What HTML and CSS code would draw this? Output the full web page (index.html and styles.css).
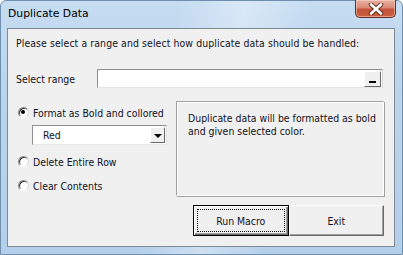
FILE: index.html
```html
<!DOCTYPE html>
<html>
<head>
<meta charset="utf-8">
<link rel="stylesheet" href="styles.css">
</head>
<body>
<div class="window">
  <div class="titlebar">
    <span class="title">Duplicate Data</span>
    <div class="close">
      <svg width="16" height="12" viewBox="0 0 16 12">
        <path d="M3 1.5 L13 10.5 M13 1.5 L3 10.5" stroke="#5a2a22" stroke-width="4.4" stroke-linecap="round" fill="none"/>
        <path d="M3 1.5 L13 10.5 M13 1.5 L3 10.5" stroke="#ffffff" stroke-width="2.6" stroke-linecap="round" fill="none"/>
      </svg>
    </div>
  </div>
  <div class="client">
    <p class="intro">Please select a range and select how duplicate data should be handled:</p>
    <div class="range-row">
      <span class="range-label">Select range</span>
      <div class="refedit">
        <div class="ref-btn"><span class="ref-bar"></span></div>
      </div>
    </div>
    <div class="main">
      <div class="options">
        <div class="radio-row first"><span class="radio checked"></span><span>Format as Bold and collored</span></div>
        <div class="combo">
          <span class="combo-text">Red</span>
          <div class="drop"><span class="tri"></span></div>
        </div>
        <div class="radio-row second"><span class="radio"></span><span>Delete Entire Row</span></div>
        <div class="radio-row third"><span class="radio"></span><span>Clear Contents</span></div>
      </div>
      <div class="info">Duplicate data will be formatted as bold and given selected color.</div>
    </div>
    <div class="buttons">
      <div class="btn default"><span class="focus">Run Macro</span></div>
      <div class="btn">Exit</div>
    </div>
  </div>
</div>
</body>
</html>
```

FILE: styles.css
```css
* { box-sizing: border-box; }
html, body { margin: 0; padding: 0; }
body {
  width: 403px;
  height: 255px;
  overflow: hidden;
  font-family: "DejaVu Sans Condensed", "DejaVu Sans", sans-serif;
  font-size: 10.4px;
  color: #111122;
}
.window {
  width: 403px;
  height: 255px;
  background:
    linear-gradient(100deg, rgba(255,255,255,0) 40%, rgba(255,255,255,0.35) 55%, rgba(255,255,255,0) 70%),
    linear-gradient(180deg, #c6dcf1 0%, #bcd5ee 30%, #b4cfea 100%);
  border: 1px solid #6f8fae;
  border-radius: 6px 6px 0 0;
  padding: 0 7px 7px 6px;
  display: flex;
  flex-direction: column;
}
.titlebar {
  height: 27px;
  display: flex;
  align-items: flex-start;
  justify-content: space-between;
}
.title {
  font-family: "DejaVu Sans", sans-serif;
  font-size: 10.8px;
  color: #000;
  margin-top: 6px;
  margin-left: 1px;
}
.close {
  width: 41px;
  height: 18px;
  margin-top: -1px;
  margin-right: -1px;
  border: 1px solid #6b2a22;
  border-top: none;
  border-radius: 0 0 5px 5px;
  background: linear-gradient(180deg, #e9b0a2 0%, #d98a76 45%, #c5523a 55%, #c8613f 100%);
  box-shadow: inset 0 0 0 1px rgba(255,220,210,0.5);
  display: flex;
  align-items: center;
  justify-content: center;
}
.client {
  flex: 1;
  background: #f0f0f0;
  border: 1px solid #7d8a96;
  padding: 8px 10px 0 8px;
  display: flex;
  flex-direction: column;
}
.intro {
  margin: 0;
  line-height: 13px;
  letter-spacing: 0.1px;
}
.range-row {
  margin-top: 19px;
  display: flex;
  align-items: center;
  height: 19px;
}
.range-label {
  width: 81px;
}
.refedit {
  width: 286px;
  height: 19px;
  background: #fff;
  border: 1px solid #8e8f8f;
  border-right-color: #d8d8d8;
  border-bottom-color: #e3e3e3;
  display: flex;
  justify-content: flex-end;
  align-items: center;
  padding-right: 1px;
}
.ref-btn {
  width: 17px;
  height: 16px;
  background: #f0f0f0;
  border: 1px solid;
  border-color: #fff #696969 #696969 #fff;
  display: flex;
  align-items: flex-end;
  justify-content: center;
  padding-bottom: 3px;
}
.ref-bar {
  width: 7px;
  height: 2px;
  background: #000;
}
.main {
  margin-top: 13px;
  display: flex;
  height: 95px;
}
.options {
  width: 160px;
}
.radio-row {
  display: flex;
  align-items: center;
  height: 13px;
}
.radio-row.first { margin-top: 5px; }
.radio-row.second { margin-top: 10px; }
.radio-row.third { margin-top: 11px; }
.radio {
  width: 11px;
  height: 11px;
  margin-left: 2px;
  margin-right: 4px;
  border-radius: 50%;
  background: #fff;
  border: 1px solid;
  border-color: #7a7a7a #d8d8d8 #f8f8f8 #8a8a8a;
  box-shadow: inset 1px 1px 0 #404040;
  position: relative;
}
.radio.checked::after {
  content: "";
  position: absolute;
  left: 2px;
  top: 2px;
  width: 4px;
  height: 4px;
  border-radius: 50%;
  background: #000;
}
.combo {
  margin-top: 6px;
  margin-left: 16px;
  width: 135px;
  height: 20px;
  background: #fff;
  border: 1px solid #8e8f8f;
  border-right-color: #e0e0e0;
  border-bottom-color: #e8e8e8;
  display: flex;
  align-items: center;
  justify-content: space-between;
  padding: 0 1px 0 10px;
}
.drop {
  width: 15px;
  height: 16px;
  background: #f0f0f0;
  border: 1px solid;
  border-color: #fff #696969 #696969 #fff;
  display: flex;
  align-items: center;
  justify-content: center;
}
.tri {
  width: 0;
  height: 0;
  border-left: 4px solid transparent;
  border-right: 4px solid transparent;
  border-top: 4px solid #000;
  margin-top: 1px;
}
.info {
  width: 208px;
  height: 95px;
  border: 1px solid #a0a0a0;
  border-right-color: #fff;
  border-bottom-color: #fff;
  box-shadow: 1px 1px 0 #a0a0a0, inset 1px 1px 0 #fff;
  padding: 10px 0 0 11px;
  line-height: 13px;
}
.buttons {
  margin-top: 9px;
  margin-left: 177px;
  display: flex;
}
.btn {
  width: 96px;
  height: 31px;
  background: #f0f0f0;
  border: 1px solid;
  border-color: #fff #696969 #696969 #fff;
  box-shadow: inset -1px -1px 0 #a0a0a0;
  display: flex;
  align-items: center;
  justify-content: center;
}
.btn.default {
  border: 1px solid #000;
  box-shadow: inset 1px 1px 0 #fff, inset -1px -1px 0 #696969, inset -2px -2px 0 #a0a0a0;
  padding: 3px;
}
.focus {
  flex: 1;
  align-self: stretch;
  border: 1px dotted #000;
  display: flex;
  align-items: center;
  justify-content: center;
}
```
